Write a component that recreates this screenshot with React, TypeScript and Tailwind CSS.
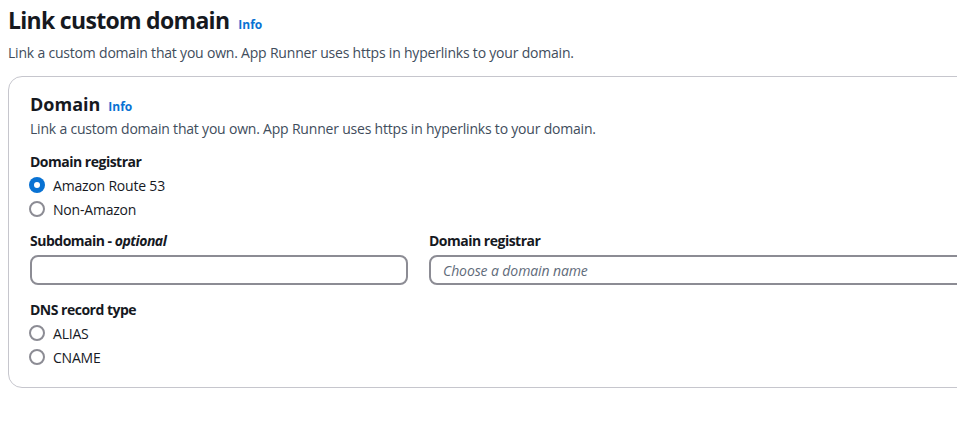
import React from "react";

const font = { fontFamily: '"Open Sans", "Noto Sans", Arial, sans-serif' };

function Radio({ checked, label }: { checked?: boolean; label: string }) {
  return (
    <div className="flex items-center h-6">
      {checked ? (
        <span className="ml-[-1px] w-[16px] h-[16px] rounded-full bg-[#0972d3] flex items-center justify-center">
          <span className="w-[6px] h-[6px] rounded-full bg-white" />
        </span>
      ) : (
        <span className="ml-[-1px] w-[16px] h-[16px] rounded-full border-2 border-[#8c8c94] bg-white" />
      )}
      <span className="ml-[8px] text-[14px] tracking-[-0.2px] text-[#16191f]">{label}</span>
    </div>
  );
}

export default function App() {
  return (
    <div className="w-[957px] h-[427px] overflow-hidden bg-white text-[#16191f]" style={font}>
      <div className="pl-2 pt-[5px]">
        <div className="flex items-baseline">
          <h1 className="text-[23px] leading-[30px] font-bold tracking-[-0.7px]">Link custom domain</h1>
          <span className="ml-[9px] text-[12px] font-bold text-[#0972d3]">Info</span>
        </div>
        <p className="mt-[8px] text-[14px] leading-[20px] tracking-[-0.2px] text-[#414d5c]">
          Link a custom domain that you own. App Runner uses https in hyperlinks to your domain.
        </p>
        <div className="mt-[13px] w-[1100px] rounded-[14px] border border-[#c6c6cd] pl-[21px] pt-[14px] pb-[18px]">
          <div className="flex items-baseline">
            <h2 className="text-[18px] leading-[26px] font-bold">Domain</h2>
            <span className="ml-[8px] text-[12px] font-bold text-[#0972d3]">Info</span>
          </div>
          <p className="mt-[2px] text-[14px] leading-[20px] tracking-[-0.2px] text-[#414d5c]">
            Link a custom domain that you own. App Runner uses https in hyperlinks to your domain.
          </p>
          <div className="mt-[13px] text-[14px] leading-[20px] font-bold tracking-[-0.5px]">Domain registrar</div>
          <div className="mt-[1px] flex flex-col">
            <Radio checked label="Amazon Route 53" />
            <Radio label="Non-Amazon" />
          </div>
          <div className="mt-[10px] grid grid-cols-[378px_1fr] gap-x-[21px]">
            <div>
              <div className="text-[14px] leading-[20px] font-bold tracking-[-0.5px]">
                Subdomain - <i>optional</i>
              </div>
              <div className="mt-[4px] h-[30px] rounded-[8px] border-2 border-[#8c8c94] bg-white" />
            </div>
            <div>
              <div className="text-[14px] leading-[20px] font-bold tracking-[-0.5px]">Domain registrar</div>
              <div className="mt-[4px] h-[30px] rounded-[8px] border-2 border-[#8c8c94] bg-white flex items-center pl-[12px]">
                <span className="text-[14px] italic tracking-[-0.1px] text-[#5f6b7a]">Choose a domain name</span>
              </div>
            </div>
          </div>
          <div className="mt-[15px] text-[14px] leading-[20px] font-bold tracking-[-0.5px]">DNS record type</div>
          <div className="mt-[1px] flex flex-col">
            <Radio label="ALIAS" />
            <Radio label="CNAME" />
          </div>
        </div>
      </div>
    </div>
  );
}
